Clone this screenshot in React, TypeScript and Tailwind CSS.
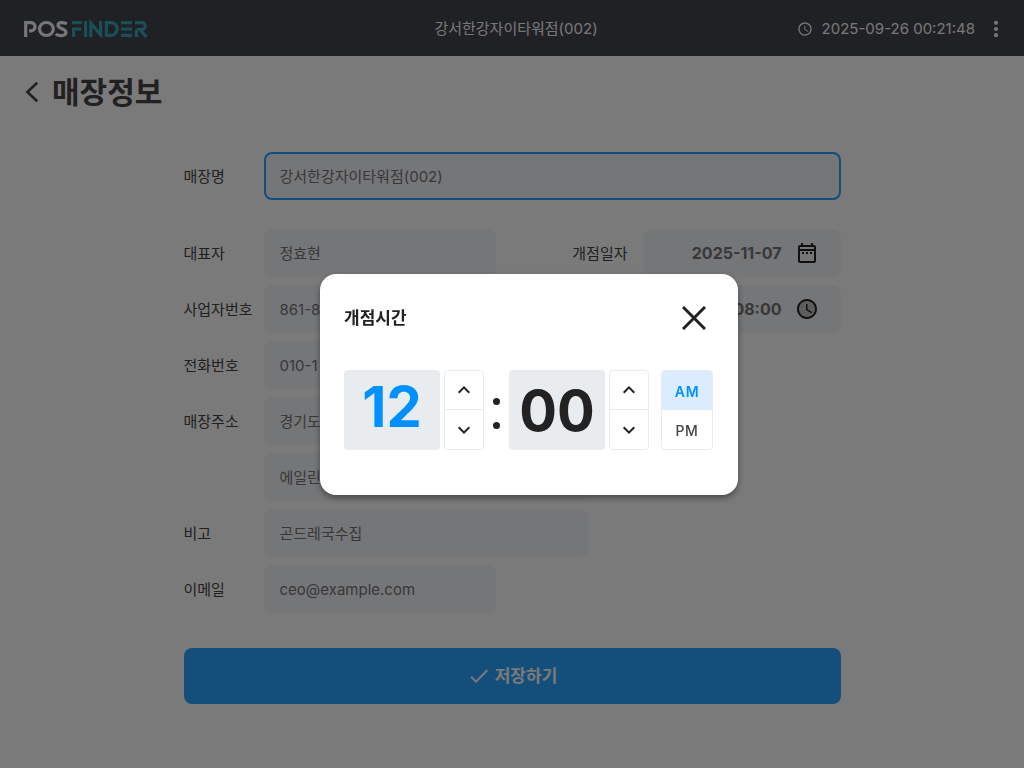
import { useState } from "react";
import type { ReactNode } from "react";

const font = "font-['Inter','Noto_Sans_CJK_KR',sans-serif]";

function Logo() {
  return (
    <svg viewBox="0 0 124 18" className="h-[18px] w-[124px]" fill="none" strokeWidth="3.2" role="img" aria-label="POS FINDER">
      <g stroke="#eeeeee">
        <path d="M1.7 17V2.6H7a4.1 4.1 0 0 1 0 8.2H5" />
        <ellipse cx="22.4" cy="9" rx="6.9" ry="6.5" />
        <path d="M42.8 4C40.6 2.1 34 1.6 34 5.3c0 4 8 3 8 7 0 4-7.4 4.2-10.2 1.6" />
      </g>
      <g stroke="#359fb0">
        <path d="M48 2.6h10M49.6 17V9.2h7.4M61.6 1v16M66.8 17V3.2l9.8 11.6V1M82.4 15.4V2.6h4.4a6.4 6.4 0 0 1 0 12.8h-6M97 2.6h11M97 9h11M97 15.4h11M112.4 17V9.4M111 2.6h6.8a3.5 3.5 0 0 1 0 7h-2l6.6 7.2" />
      </g>
    </svg>
  );
}

function ClockIcon({ className, faceColor = "none" }: { className: string; faceColor?: string }) {
  return (
    <svg viewBox="0 0 24 24" className={className} aria-hidden="true">
      <circle cx="12" cy="12" r="9" fill={faceColor} />
      <path
        fill="currentColor"
        d="M11.99 2C6.47 2 2 6.48 2 12s4.47 10 9.99 10C17.52 22 22 17.52 22 12S17.52 2 11.99 2M12 20c-4.42 0-8-3.58-8-8s3.58-8 8-8 8 3.58 8 8-3.58 8-8 8m.5-13H11v6l5.25 3.15.75-1.23-4.5-2.67z"
      />
    </svg>
  );
}

function CalendarIcon() {
  return (
    <svg viewBox="0 0 24 24" className="size-6" aria-hidden="true">
      <path
        fill="currentColor"
        d="M7 11h2v2H7zm14-5v14c0 1.1-.9 2-2 2H5c-1.11 0-2-.9-2-2l.01-14c0-1.1.88-2 1.99-2h1V2h2v2h8V2h2v2h1c1.1 0 2 .9 2 2M5 8h14V6H5zm14 12V10H5v10zm-4-7h2v-2h-2zm-4 0h2v-2h-2z"
      />
    </svg>
  );
}

function Chevron({ up = false }: { up?: boolean }) {
  return (
    <svg viewBox="0 0 24 24" className="size-6" fill="none" stroke="currentColor" strokeWidth="2" aria-hidden="true">
      <path d={up ? "m6.7 14.7 5.3-5.3 5.3 5.3" : "m6.7 9.3 5.3 5.3 5.3-5.3"} />
    </svg>
  );
}

function Label({ id, children }: { id: string; children: ReactNode }) {
  return (
    <label htmlFor={id} className="w-20 shrink-0 pt-0.5 text-[15px] whitespace-nowrap text-[#424242]">
      {children}
    </label>
  );
}

function Field({ id, label, value, width, latin = false }: { id: string; label?: string; value: string; width: string; latin?: boolean }) {
  return (
    <div className="flex items-center">
      {label ? <Label id={id}>{label}</Label> : <span className="w-20 shrink-0" />}
      <input
        id={id}
        aria-label={label ?? "상세주소"}
        defaultValue={value}
        className={`h-12 rounded-lg bg-[#ebedf0] px-4 text-[15px] text-[#707070] outline-none ${latin ? "" : "pb-0.5"} ${width}`}
      />
    </div>
  );
}

function PickerField({ id, label, value, icon }: { id: string; label: string; value: string; icon: ReactNode }) {
  return (
    <div className="flex items-center justify-end gap-4">
      <label htmlFor={id} className="pt-0.5 text-[15px] text-[#424242]">{label}</label>
      <button
        id={id}
        className="flex h-12 w-[197px] items-center justify-end gap-[13px] rounded-lg bg-[#ebedf0] pr-[22px] font-bold text-[#707070]"
      >
        {value}
        <span className="text-[#222222]">{icon}</span>
      </button>
    </div>
  );
}

function Stepper({ name, onStep }: { name: string; onStep: (d: number) => void }) {
  return (
    <div className="grid h-20 w-10 grid-rows-2 divide-y divide-[#e9ecef] overflow-hidden rounded-sm border border-[#e9ecef]">
      <button aria-label={`${name} 증가`} onClick={() => onStep(1)} className="flex items-center justify-center">
        <Chevron up />
      </button>
      <button aria-label={`${name} 감소`} onClick={() => onStep(-1)} className="flex items-center justify-center pt-0.5">
        <Chevron />
      </button>
    </div>
  );
}

function TimeDialog() {
  const [hour, setHour] = useState(12);
  const [minute, setMinute] = useState(0);
  const [period, setPeriod] = useState("AM");
  const digits = "h-20 w-24 rounded-sm bg-[#e9ecef] text-center text-[56px] font-bold";
  return (
    <div role="dialog" aria-modal="true" aria-labelledby="time-title" className="rounded-2xl bg-white px-6 pt-5 pb-[45px] text-[#222222] shadow-[0_3px_6px_rgba(0,0,0,0.4)]">
      <div className="flex items-center justify-between">
        <h2 id="time-title" className="pt-0.5 text-[17px] font-bold">개점시간</h2>
        <button aria-label="닫기" className="-mr-1 flex size-12 items-center justify-center">
          <svg viewBox="0 0 24 24" className="size-6" stroke="currentColor" strokeWidth="3" aria-hidden="true">
            <path d="M1 1l22 22M23 1L1 23" />
          </svg>
        </button>
      </div>
      <div className="mt-7 flex pr-px">
        <output className={`${digits} leading-[74px] text-[#0091ff]`}>{hour}</output>
        <span className="w-1" />
        <Stepper name="시" onStep={(d) => setHour(((hour - 1 + d + 12) % 12) + 1)} />
        <span className="flex w-[25px] flex-col items-center justify-center gap-[17px] pt-2" aria-label=":">
          <span className="size-[7px] rounded-full bg-[#222222]" />
          <span className="size-[7px] rounded-full bg-[#222222]" />
        </span>
        <output className={`${digits} leading-[82px]`}>{String(minute).padStart(2, "0")}</output>
        <span className="w-1" />
        <Stepper name="분" onStep={(d) => setMinute((minute + d + 60) % 60)} />
        <span className="w-3" />
        <div className="flex h-20 w-[52px] flex-col overflow-hidden rounded-sm border border-[#e9ecef] text-sm font-medium tracking-wider">
          {["AM", "PM"].map((p) => (
            <button
              key={p}
              aria-pressed={period === p}
              onClick={() => setPeriod(p)}
              className={`flex-1 pt-[3px] ${period === p ? "bg-[#dbecff] font-semibold text-[#0091ff]" : "text-[#424242]"}`}
            >
              {p}
            </button>
          ))}
        </div>
      </div>
    </div>
  );
}

export default function App() {
  return (
    <div className={`min-h-screen bg-[#f5f5f5] ${font}`}>
      <header className="grid h-14 grid-cols-[1fr_auto_1fr] items-center bg-[#404248] pt-0.5 pr-4 pl-6 text-[15px] text-[#eeeeee]">
        <Logo />
        <p>강서한강자이타워점(002)</p>
        <div className="flex items-center justify-end gap-[9px]">
          <ClockIcon className="size-4" />
          <time>2025-09-26 00:21:48</time>
          <button aria-label="메뉴" className="flex size-6 items-center justify-center">
            <svg viewBox="0 0 24 24" className="size-6" fill="currentColor" aria-hidden="true">
              <circle cx="12" cy="5.8" r="2.1" />
              <circle cx="12" cy="12" r="2.1" />
              <circle cx="12" cy="18.2" r="2.1" />
            </svg>
          </button>
        </div>
      </header>

      <main>
        <div className="flex h-[72px] items-center gap-2 px-5">
          <button aria-label="뒤로" className="flex size-6 items-center justify-center text-[#424242]">
            <svg viewBox="0 0 24 24" className="size-6" fill="none" stroke="currentColor" strokeWidth="2.6" aria-hidden="true">
              <path d="M17.2 2.8 7.4 12l9.8 9.2" />
            </svg>
          </button>
          <h1 className="text-[30px] font-bold text-[#424242]">매장정보</h1>
        </div>

        <form className="mx-auto max-w-[657px] pt-6" onSubmit={(e) => e.preventDefault()}>
          <div className="flex items-center">
            <Label id="store">매장명</Label>
            <input
              id="store"
              defaultValue="강서한강자이타워점(002)"
              className="h-12 min-w-0 flex-1 rounded-lg border-2 border-[#289cf4] bg-[#ebedf0] px-[14px] pb-0.5 text-[15px] text-[#707070] outline-none"
            />
          </div>
          <div className="mt-[29px] flex flex-col gap-2">
            <div className="flex justify-between">
              <Field id="owner" label="대표자" value="정효현" width="w-58" />
              <PickerField id="open-date" label="개점일자" value="2025-11-07" icon={<CalendarIcon />} />
            </div>
            <div className="flex justify-between">
              <Field id="biz" label="사업자번호" value="861-8" width="w-58" latin />
              <PickerField id="open-time" label="개점시간" value="08:00" icon={<ClockIcon className="size-6" faceColor="#bdbdbd" />} />
            </div>
            <Field id="phone" label="전화번호" value="010-1" width="w-58" latin />
            <Field id="addr" label="매장주소" value="경기도" width="w-81" />
            <Field id="addr2" value="에일린" width="w-81" />
            <Field id="memo" label="비고" value="곤드레국수집" width="w-81" />
            <Field id="email" label="이메일" value="ceo@example.com" width="w-58" latin />
          </div>
          <button className="mt-[35px] flex h-14 w-full items-center justify-center gap-1 rounded-lg bg-[#289ff8] text-[17px] font-bold text-[#f5f5f5]">
            <svg viewBox="0 0 24 24" className="size-6" fill="currentColor" aria-hidden="true">
              <path d="M9 16.17 4.83 12l-1.42 1.41L9 19 21 7l-1.41-1.41z" />
            </svg>
            <span className="pt-0.5">저장하기</span>
          </button>
        </form>
      </main>

      <div className="fixed inset-0 flex items-center justify-center bg-black/50 pl-[34px]">
        <TimeDialog />
      </div>
    </div>
  );
}
